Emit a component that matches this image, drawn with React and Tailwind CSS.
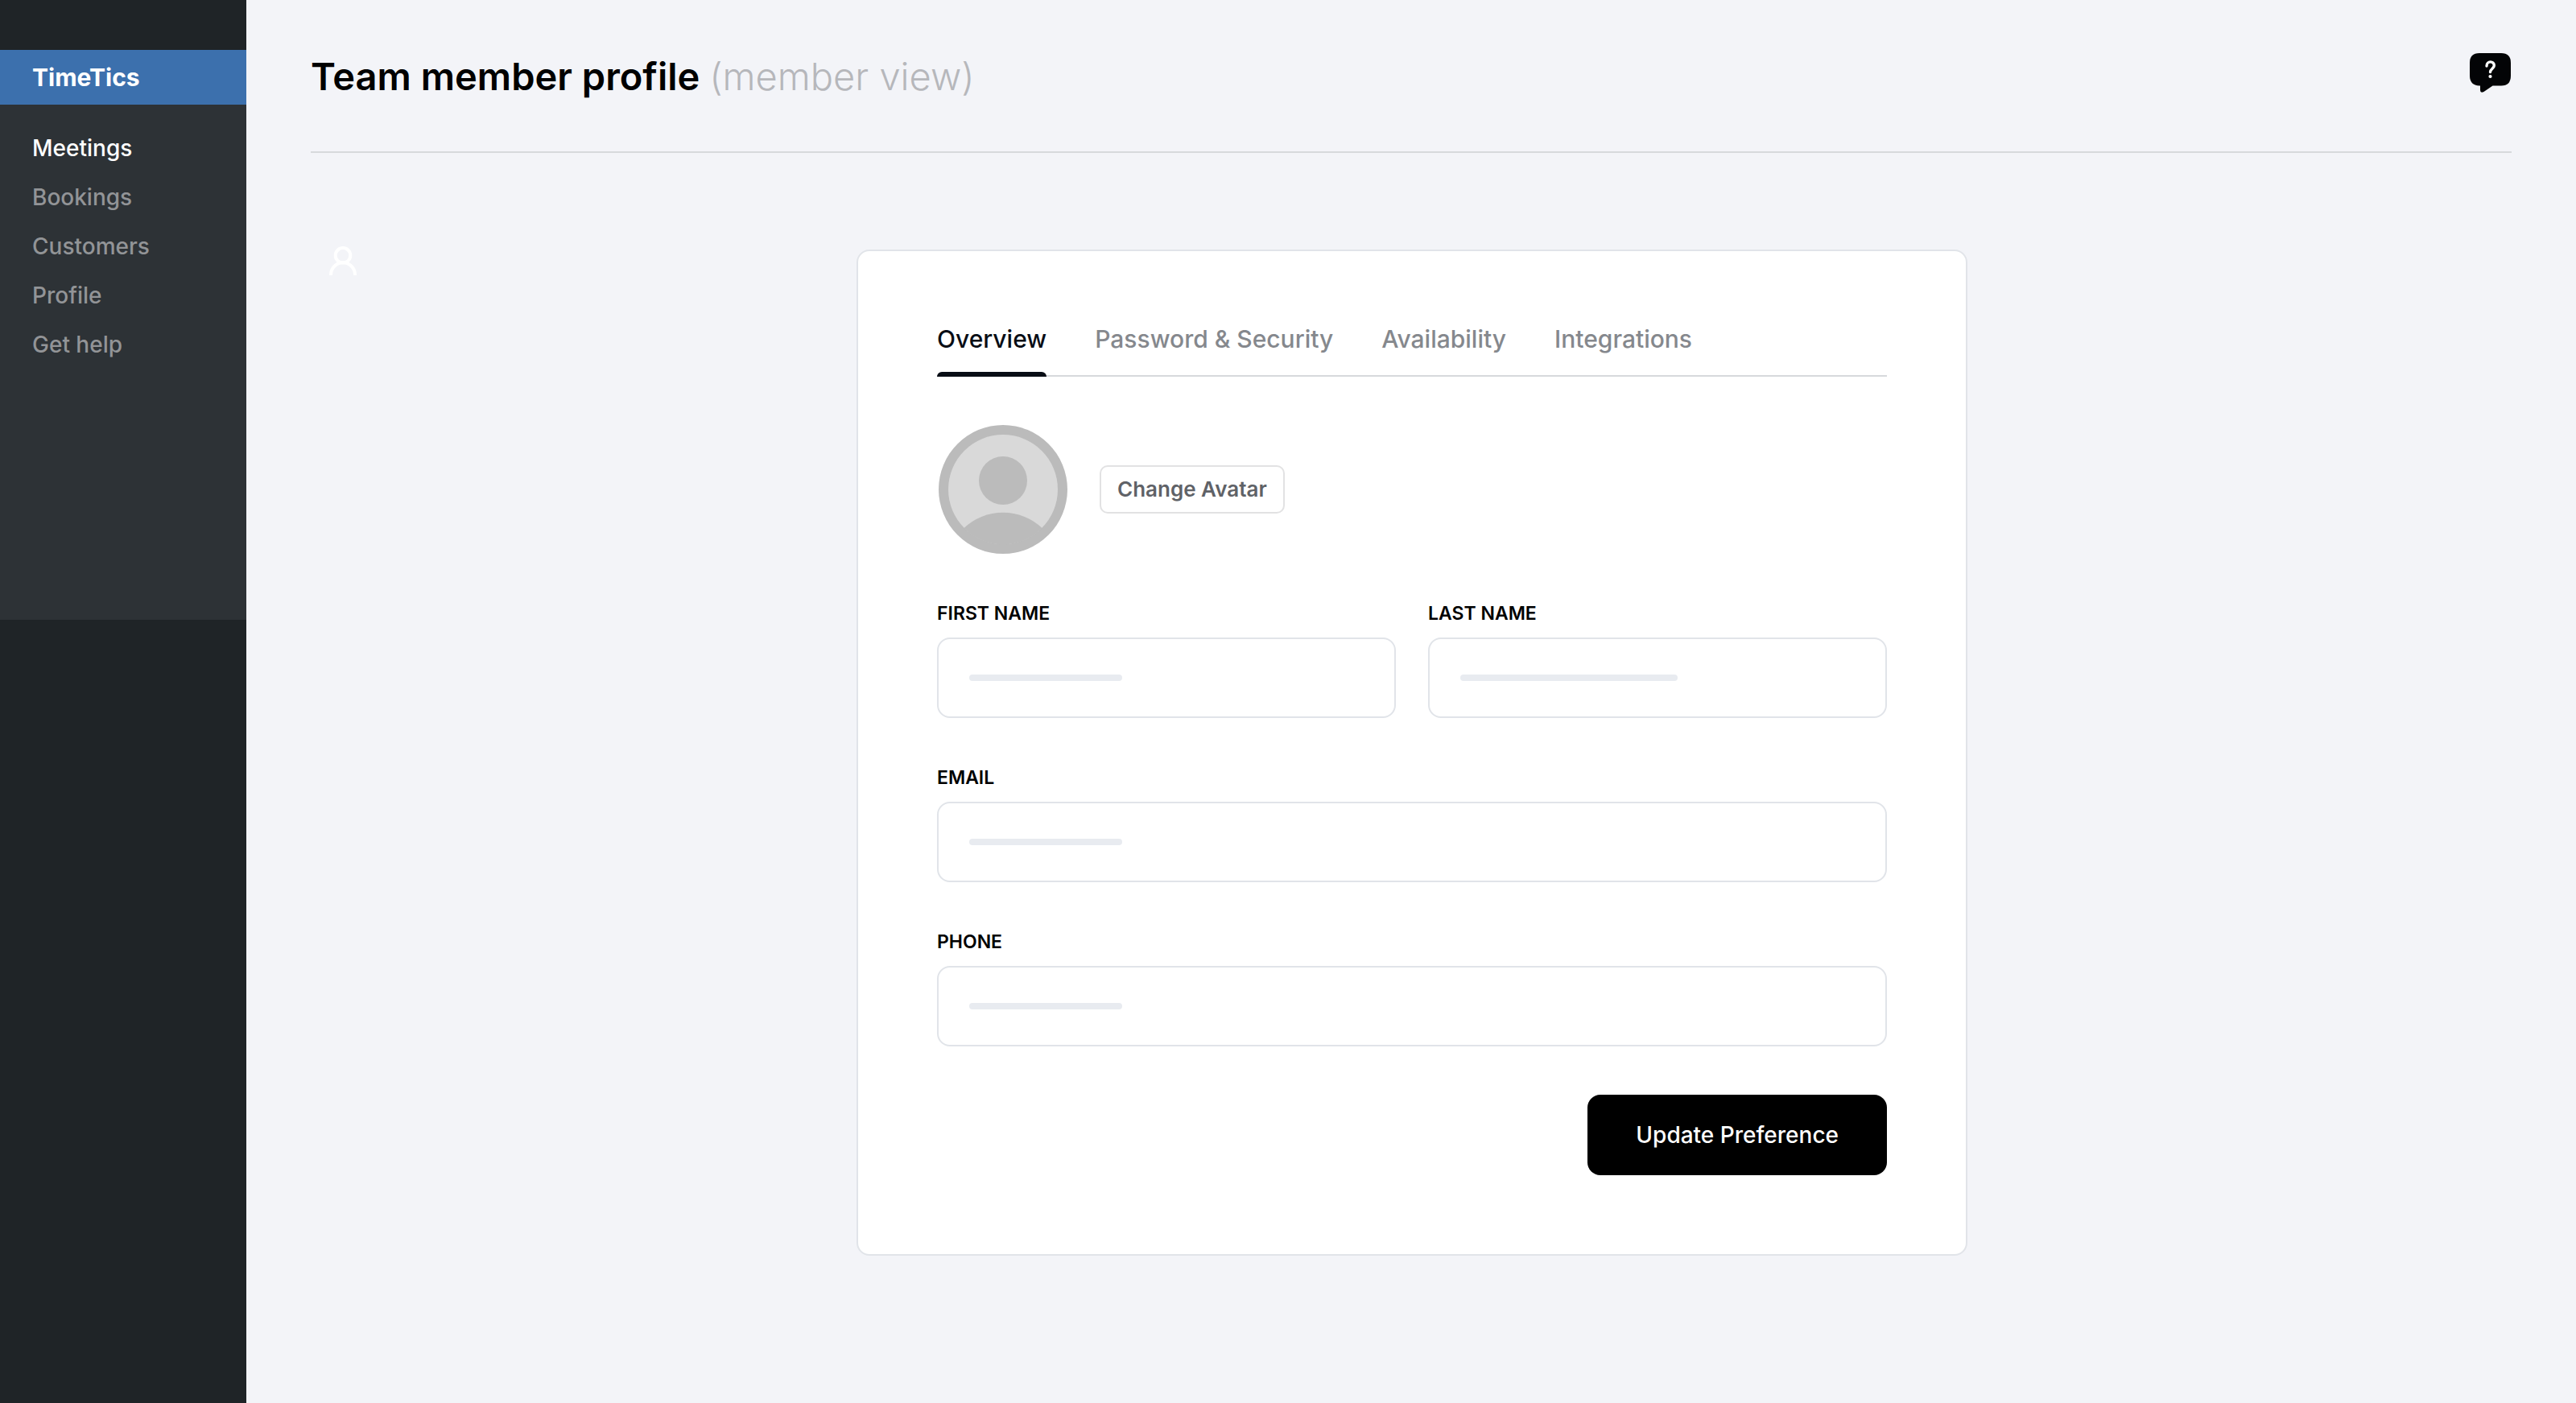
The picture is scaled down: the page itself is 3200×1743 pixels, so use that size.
const menu = ['Bookings', 'Customers', 'Profile', 'Get help'];
const tabs = ['Password & Security', 'Availability', 'Integrations'];

function Sidebar() {
  return (
    <aside className="flex w-[306px] shrink-0 flex-col bg-[#1f2427] pt-[62px]">
      <div className="flex h-[68px] items-center bg-[#3c70ad] px-10 text-[30px] leading-9 font-bold text-white">
        TimeTics
      </div>
      <nav className="min-h-[640px] bg-[#2d3236] px-10 pt-6 text-[28px] leading-[61px] font-medium text-[#929497]">
        <a href="#meetings" className="block text-white">Meetings</a>
        {menu.map((item) => (
          <a key={item} href={'#' + item.toLowerCase().replace(' ', '-')} className="block">
            {item}
          </a>
        ))}
      </nav>
    </aside>
  );
}

function HelpIcon() {
  return (
    <svg width="52" height="50" viewBox="0 0 52 50" aria-hidden="true">
      <path
        d="M12 0H39Q51 0 51 12V28Q51 40.500 39 40.500H28.500L17.500 48Q13 50 13 46V40.500H12Q0 40 0 28V12Q0 0 12 0Z"
        fill="#030406"
      />
      <path
        d="M21 16C21 9 30.500 9.500 30.300 15.500C30 19.500 25.500 19.500 25.500 23.500"
        fill="none"
        stroke="#fff"
        strokeWidth="3.4"
        strokeLinecap="round"
      />
      <circle cx="25.500" cy="29" r="2.100" fill="#fff" />
    </svg>
  );
}

function Avatar() {
  return (
    <svg width="160" height="160" viewBox="0 0 160 160" role="img" aria-label="Avatar">
      <circle cx="80" cy="80" r="80" fill="#bbbbbb" />
      <circle cx="80" cy="80" r="68" fill="#d9d9d9" />
      <circle cx="80" cy="69" r="30" fill="#bbbbbb" />
      <path d="M31.500 128A70.600 70.600 0 0 1 128.500 128A68 68 0 0 1 31.500 128Z" fill="#bbbbbb" />
    </svg>
  );
}

function Field({ id, label, type = 'text', wide = false }) {
  return (
    <div className="flex flex-col gap-[14px]">
      <label htmlFor={id} className="text-[23px] leading-8 font-semibold text-black uppercase">
        {label}
      </label>
      <div className="relative flex items-center">
        <input
          id={id}
          type={type}
          className="h-[100px] w-full rounded-2xl border-2 border-[#e1e4e9] bg-white px-10 text-[28px]"
        />
        <span
          className={
            wide
              ? 'pointer-events-none absolute left-10 h-2 w-[270px] rounded-full bg-[#e8ebf0]'
              : 'pointer-events-none absolute left-10 h-2 w-[190px] rounded-full bg-[#e8ebf0]'
          }
        />
      </div>
    </div>
  );
}

export default function App() {
  return (
    <div className="flex min-h-screen bg-[#f3f4f8] font-['Inter',sans-serif]">
      <Sidebar />
      <main className="min-w-0 flex-1">
        <header className="mx-20 flex items-start justify-between border-b-2 border-[#d7d9dc] pt-[66px] pb-[64px]">
          <h1 className="text-[47px] leading-[58px] font-semibold text-black">
            Team member profile <span className="font-light text-[#b6b7bb]">(member view)</span>
          </h1>
          <button type="button" aria-label="Help">
            <HelpIcon />
          </button>
        </header>

        <div className="grid grid-cols-[1fr_1380px_1fr] pt-[120px] pr-20 pb-20 pl-[82px]">
          <svg
            width="40"
            height="42"
            viewBox="0 0 40 42"
            fill="none"
            stroke="#fff"
            strokeWidth="4"
            strokeLinecap="butt"
            className="-mt-2 ml-[18px]"
            aria-hidden="true"
          >
            <circle cx="20" cy="15.300" r="9.300" />
            <path d="M5 40V39.500A15 15.200 0 0 1 35 39.500V40" />
          </svg>

          <section className="rounded-2xl border-2 border-[#e1e4e9] bg-white px-[98px] pt-[74px] pb-[98px]">
            <div
              role="tablist"
              className="flex gap-[60px] border-b-2 border-[#d7d9dc] text-[30px] leading-9 font-medium text-[#85888d]"
            >
              <button type="button" role="tab" aria-selected="true" className="relative pt-[17px] pb-[27px] text-[#080d15]">
                Overview
                <span className="absolute inset-x-0 -bottom-0.5 h-1.5 rounded-t-md bg-[#080d15]" />
              </button>
              {tabs.map((tab) => (
                <button key={tab} type="button" role="tab" aria-selected="false" className="pt-[17px] pb-[27px]">
                  {tab}
                </button>
              ))}
            </div>

            <div className="mt-[60px] ml-0.5 flex items-center gap-10">
              <Avatar />
              <button
                type="button"
                className="h-[60px] rounded-[10px] border-2 border-[#e2e2e3] px-5 text-[26px] leading-8 font-semibold text-[#5f6267]"
              >
                Change Avatar
              </button>
            </div>

            <form className="mt-[58px] flex flex-col gap-[58px]">
              <div className="grid grid-cols-2 gap-10">
                <Field id="first-name" label="First name" />
                <Field id="last-name" label="Last name" wide />
              </div>
              <Field id="email" label="Email" type="email" />
              <Field id="phone" label="Phone" type="tel" />
              <button
                type="button"
                className="mt-0.5 h-[100px] self-end rounded-2xl bg-black px-[60px] text-[28px] leading-9 font-medium text-white"
              >
                Update Preference
              </button>
            </form>
          </section>
        </div>
      </main>
    </div>
  );
}
